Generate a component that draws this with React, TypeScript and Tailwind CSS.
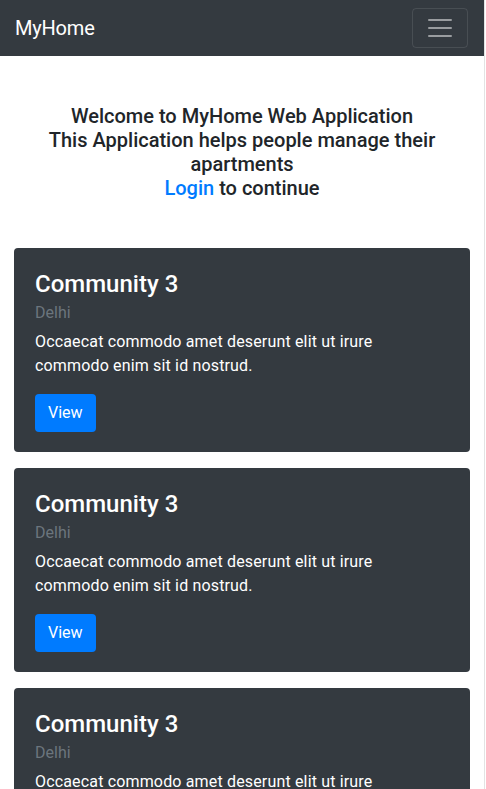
const COMMUNITIES = [
  { id: 1, name: 'Community 3', city: 'Delhi', text: 'Occaecat commodo amet deserunt elit ut irure commodo enim sit id nostrud.' },
  { id: 2, name: 'Community 3', city: 'Delhi', text: 'Occaecat commodo amet deserunt elit ut irure commodo enim sit id nostrud.' },
  { id: 3, name: 'Community 3', city: 'Delhi', text: 'Occaecat commodo amet deserunt elit ut irure commodo enim sit id nostrud.' },
];

export default function App() {
  return (
    <div className="h-[789px] w-[486px] overflow-hidden bg-white font-['Roboto',sans-serif]">
      <div className="h-full w-[485px] border-r border-[#e3e3e3]">
        {/* Navbar */}
        <nav className="flex h-14 items-center justify-between bg-[#343a40] pl-[15px] pr-4">
          <span className="text-[20px] leading-[30px] tracking-[-0.01em] text-white">MyHome</span>
          <button className="flex h-10 w-14 items-center justify-center rounded border border-white/10">
            <svg width="30" height="30" viewBox="0 0 30 30">
              <path d="M4 7h22M4 15h22M4 23h22" stroke="rgba(255,255,255,0.5)" strokeWidth="2" strokeLinecap="round" />
            </svg>
          </button>
        </nav>

        {/* Welcome */}
        <div className="px-[15px] py-12 text-center text-[20px] font-medium leading-6 text-[#212529]">
          <div>Welcome to MyHome Web Application</div>
          <div>This Application helps people manage their apartments</div>
          <div>
            <a href="#" className="text-[#007bff]">Login</a> to continue
          </div>
        </div>

        {/* Cards */}
        <div className="flex flex-col gap-4 px-[14px]">
          {COMMUNITIES.map((c) => (
            <CommunityCard key={c.id} item={c} />
          ))}
        </div>
      </div>
    </div>
  );
}

function CommunityCard({ item }: { item: { name: string; city: string; text: string } }) {
  return (
    <div className="rounded bg-[#343a40] py-5 pl-[21px] pr-5 text-white">
      <h4 className="mt-[2px] mb-[10px] text-[24px] font-medium leading-[1.2]">{item.name}</h4>
      <h6 className="-mt-1.5 mb-2 text-base leading-[1.2] text-[#6c757d]">{item.city}</h6>
      <p className="mb-4 pr-16 text-base leading-6 tracking-[0.01em]">{item.text}</p>
      <button className="h-[38px] rounded bg-[#007bff] px-[13px] text-base leading-6 text-white">View</button>
    </div>
  );
}
